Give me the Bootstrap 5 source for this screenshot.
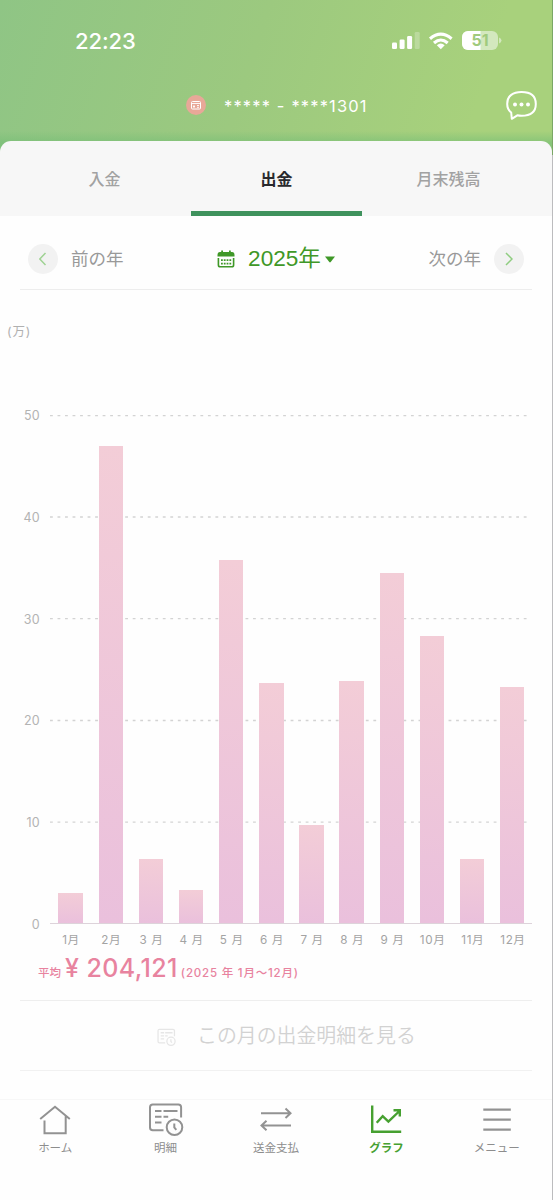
<!DOCTYPE html>
<html lang="ja">
<head>
<meta charset="utf-8">
<meta name="viewport" content="width=device-width, initial-scale=1">
<title>出金グラフ</title>
<link href="https://cdn.jsdelivr.net/npm/bootstrap@5.3.0/dist/css/bootstrap.min.css" rel="stylesheet">
<style>
body{font-family:Inter,"Noto Sans CJK JP",sans-serif;background:#fefefe;color:#999;overflow:hidden;line-height:1}
.screen{height:1200px;width:553px;border-right:1px solid #bcbcbe}
.hero{height:155px;margin-right:-1px;margin-bottom:-14px;background:linear-gradient(to bottom,transparent 131px,rgba(118,190,118,.65) 143px),linear-gradient(108deg,#8fc585 0%,#9cc97f 45%,#a8d17c 85%,#a8d17c 100%);color:#fff;border-right:1px solid #7aa765}
.status{height:82px;padding:0 50px 0 75px}
.clock{font-size:22px;font-weight:500;letter-spacing:-.1px}
.account{height:46px;padding-left:186px;padding-right:15px}
.acct-no{font-size:16.5px;letter-spacing:1.15px;margin-left:18px;padding-top:2px}
.coin{width:20px;height:20px;background:#e8a898}
.tabs{height:75px;background:#f7f7f7;border-radius:11px 11px 0 0;font-size:16px;font-weight:500;color:#a2a2a2;position:relative}
.tabs>div{height:75px;border-bottom:5px solid transparent;padding-top:6px}
.tabs .current{color:#29292d;border-color:#3f925d;font-weight:700}
.years{height:74px;margin:0 20px;border-bottom:1px solid #ededed;font-size:17.5px;padding:12px 8px 0}
.round{width:30px;height:30px;background:#f2f2f2}
.year{color:#3f9827;font-size:22.6px;font-family:"Liberation Sans","Noto Sans CJK JP",sans-serif;padding-top:1px}
.unit{height:125px;padding:36px 0 0 7px;font-size:12.5px;color:#b0b0b0;letter-spacing:.9px}
.chart{height:509px;padding-right:20px}
.scale{width:50px;padding-right:10px;margin:-6px 0 -8px;font-size:12.5px;color:#b3b3b3;letter-spacing:.3px}
.scale span{height:14px;line-height:14px}
.bars{border-bottom:1px solid #ddd3da}
.bars .plot{left:.5px}
.bars .item{width:24.4px;background:linear-gradient(#f3cdd7,#eac0dc)}
.months{height:32px;padding:11px 19px 0 51px;font-size:11.7px;color:#a3a3a3;letter-spacing:.6px}
.avg{height:45px;margin:0 20px;padding:0 0 0 18px;border-bottom:1px solid #eee;color:#e8839f;font-size:11.5px;font-weight:500}
.avg .amount{font-size:25px;font-weight:500;margin:0 3px 0 4px;letter-spacing:.4px;white-space:nowrap}
.avg .range{letter-spacing:.8px}
.detail{height:70px;margin:0 20px;border-bottom:1px solid #f1f1f1;font-size:19.9px;color:#d2d2d2;font-weight:350;padding-top:3px}
.tabbar{height:100px;margin-top:28px;border-top:1px solid #f7f7f7;font-size:11.5px;color:#8d8d8d}
.tabbar svg{width:36px;height:36px;margin-bottom:5px}
.tabbar .item{width:110.6px;padding-top:2px}
svg{display:block;flex:none}
</style>
</head>
<body>
<div class="screen">
<header class="hero">
  <div class="status d-flex align-items-center justify-content-between">
    <span class="clock">22:23</span>
    <div class="d-flex align-items-center">
      <svg width="28" height="18" fill="#fff"><rect y="10.5" width="5" height="6.5" rx="1.3"/><rect x="7.6" y="7.5" width="5" height="9.5" rx="1.3"/><rect x="15.1" y="4" width="5" height="13" rx="1.3"/><rect x="22.7" width="5" height="17" rx="1.3" opacity=".25"/></svg>
      <svg style="margin-left:8px" width="26" height="18" viewBox="0 0 26 18"><g fill="none" stroke="#fff" stroke-width="3.1"><path d="M2 6.7Q12.8-2.5 23.6 6.7M6 11Q12.8 5 19.7 11"/></g><path fill="#fff" d="M8.8 13.2Q12.8 9.8 16.7 13.2L12.8 17.3Z"/></svg>
      <svg style="margin-left:8px" width="40" height="20"><defs><clipPath id="cell"><rect width="36" height="19" rx="6"/></clipPath></defs><g clip-path="url(#cell)"><rect width="36" height="19" fill="#d3e8be"/><rect width="18.5" height="19" fill="#fff"/></g><path d="M37 6.5q2.5 1 2.5 3t-2.5 3z" fill="#d3e8be"/><text x="18" y="15.3" font-size="16" font-weight="700" text-anchor="middle" fill="#a0ca7d" font-family="Inter">51</text></svg>
    </div>
  </div>
  <div class="account d-flex align-items-center">
    <span class="coin rounded-circle d-flex align-items-center justify-content-center"><svg width="10" height="9" fill="none" stroke="#fff"><rect x=".5" y=".5" width="9" height="7.5" rx="1"/><path d="M1 2.5h8M2 5.5h2M3 4v3M6 4.5h2M6 6.3h2" stroke-width=".9"/></svg></span>
    <span class="acct-no">***** - ****1301</span>
    <svg class="ms-auto" width="31" height="30" viewBox="0 -.5 31 30"><path d="M5.2 22Q1.2 19 1.2 13.5C1.2 5 7.2 1.6 15.5 1.6S29.8 5 29.8 13.5s-6 11.8-14.3 11.8q-2.3 0-4.2-.5L5.8 28.3Z" fill="none" stroke="#fff" stroke-width="2" stroke-linejoin="round"/><g fill="#fff"><circle cx="9" cy="14" r="2"/><circle cx="15.5" cy="14" r="2"/><circle cx="22" cy="14" r="2"/></g></svg>
  </div>
</header>
<nav class="tabs d-flex px-3">
  <div class="d-flex align-items-center justify-content-center" style="width:175px;padding-left:2px">入金</div>
  <div class="current d-flex align-items-center justify-content-center" style="width:171px">出金</div>
  <div class="d-flex align-items-center justify-content-center" style="width:174px;padding-right:1px">月末残高</div>
</nav>
<section class="years d-flex align-items-center">
  <span class="round rounded-circle d-flex align-items-center justify-content-center"><svg width="9" height="14" fill="none" stroke="#9fd293" stroke-width="1.5"><path d="M6.5 1L.8 7l5.7 6"/></svg></span>
  <span style="margin-left:13px">前の年</span>
  <span class="year d-flex align-items-center mx-auto"><svg width="18" height="18" fill="#3f9827" style="margin-right:13px"><path d="M3 2h1.2V.5h1.8V2h6V.5h1.8V2H15q2.5.2 2.5 3v1.5H.5V5Q.5 2.2 3 2Z"/><path d="M1.4 8v7q0 1.8 1.8 1.8h11.6q1.8 0 1.8-1.8V8" fill="none" stroke="#3f9827" stroke-width="1.6"/><path d="M4 10.2h10.5M4 13.7h10.5" stroke="#3f9827" stroke-width="1.8" stroke-dasharray="1.8 1"/></svg><span>2025年</span><svg width="10" height="7" fill="#3f9827" class="ms-1"><path d="M0 .4h10L5.7 6Q5 6.8 4.3 6Z"/></svg></span>
  <span style="margin-right:13px">次の年</span>
  <span class="round rounded-circle d-flex align-items-center justify-content-center"><svg width="9" height="14" fill="none" stroke="#8fcd80" stroke-width="1.5"><path d="M2 1l6 6-6 6"/></svg></span>
</section>
<div class="unit">(万)</div>
<section class="chart d-flex">
  <div class="scale d-flex flex-column justify-content-between align-items-end"><span>50</span><span>40</span><span>30</span><span>20</span><span>10</span><span>0</span></div>
  <div class="bars flex-grow-1 position-relative">
    <svg class="position-absolute" width="482" height="509" stroke="#d3d3d3" stroke-dasharray="2.8 4.72" stroke-width="1.3"><path d="M0 .7h480M0 102h480M0 203.7h480M0 305.5h480M0 407.2h480"/></svg>
    <div class="plot position-relative d-flex justify-content-around align-items-end h-100">
      <div class="item" style="height:30px"></div><div class="item" style="height:477.5px"></div><div class="item" style="height:64px"></div><div class="item" style="height:33px"></div><div class="item" style="height:363px"></div><div class="item" style="height:240px"></div><div class="item" style="height:98.5px"></div><div class="item" style="height:242px"></div><div class="item" style="height:350px"></div><div class="item" style="height:287px"></div><div class="item" style="height:64.5px"></div><div class="item" style="height:236.5px"></div>
    </div>
  </div>
</section>
<div class="months d-flex text-center">
  <span class="w-100">1月</span><span class="w-100">2月</span><span class="w-100">3 月</span><span class="w-100">4 月</span><span class="w-100">5 月</span><span class="w-100">6 月</span><span class="w-100">7 月</span><span class="w-100">8 月</span><span class="w-100">9 月</span><span class="w-100">10月</span><span class="w-100">11月</span><span class="w-100">12月</span>
</div>
<div class="avg d-flex align-items-baseline"><span>平均</span><span class="amount">¥ 204,121</span><span class="range">(2025 年 1月〜12月)</span></div>
<div class="detail d-flex align-items-center">
  <svg style="margin-left:137px" width="19" height="19" viewBox="0 0 36 36" fill="none" stroke="#e6e6e6" stroke-width="2.4"><use href="#statement"/></svg>
  <span style="margin-left:21px">この月の出金明細を見る</span>
</div>
<nav class="tabbar d-flex">
  <div class="item d-flex flex-column align-items-center"><svg fill="none" stroke="#929292" stroke-width="2"><path d="M3.2 17L18 4.8 32.8 17M7.5 18.5v12.7h21.2V14"/></svg><span>ホーム</span></div>
  <div class="item d-flex flex-column align-items-center"><svg fill="none" stroke="#929292" stroke-width="2"><g id="statement"><path d="M15.5 28.2H4.8Q2 28.2 2 25.4V5.2Q2 2.4 4.8 2.4h25.5q2.8 0 2.8 2.8v10.3M7 9h6.5M15.5 9h14M7 14.8h6.5M15.5 14.8h4.7M7 20.6h6.5"/><circle cx="26.5" cy="25.3" r="7.8"/><path d="M26.3 21.5v4l2 2.3"/></g></svg><span>明細</span></div>
  <div class="item d-flex flex-column align-items-center"><svg fill="none" stroke="#929292" stroke-width="2"><path d="M3 11.2h29.5M27.5 6.5l5 4.7-5 4.7M33 23.5H3.5M8.5 18.8l-5 4.7 5 4.7"/></svg><span>送金支払</span></div>
  <div class="item d-flex flex-column align-items-center fw-bold" style="color:#46a030"><svg fill="none" stroke="#46a030" stroke-width="2.4"><path d="M4.2 3.5v26.3h29M8.7 20.7l6-6.5 5.7 5.5L31.5 9M25.5 8.2h6.3v6.3"/></svg><span>グラフ</span></div>
  <div class="item d-flex flex-column align-items-center"><svg fill="none" stroke="#929292" stroke-width="2.2"><path d="M4.3 7.6h27.5M4.3 17.6h27.5M4.3 27.6h27.5"/></svg><span>メニュー</span></div>
</nav>
</div>
<script src="https://cdn.jsdelivr.net/npm/bootstrap@5.3.0/dist/js/bootstrap.bundle.min.js"></script>
</body>
</html>
